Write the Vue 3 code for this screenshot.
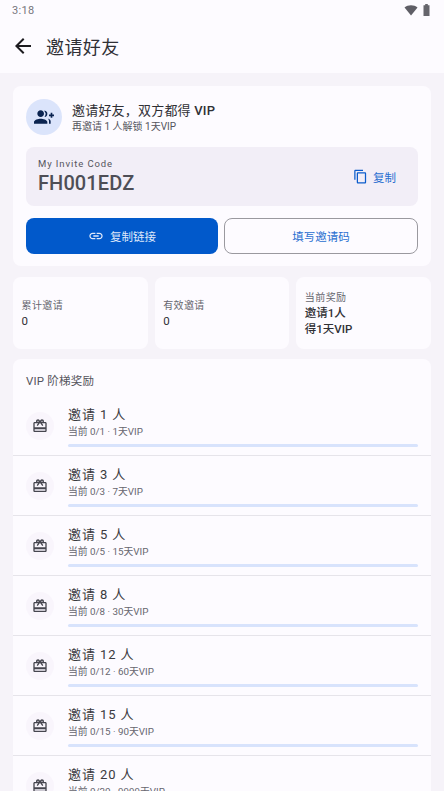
<script setup>
const rows = [
  { n: 1, d: 1 },
  { n: 3, d: 7 },
  { n: 5, d: 15 },
  { n: 8, d: 30 },
  { n: 12, d: 60 },
  { n: 15, d: 90 },
  { n: 20, d: 9999 }
]
</script>

<template>
  <div class="page">
    <div class="status">
      <span class="time">3:18</span>
      <span class="status-icons">
        <svg width="14" height="11" viewBox="0 0 14 11"><path d="M0.5 2.600C2.300 1 4.500 0.300 7 0.300s4.700 0.700 6.500 2.300L7 10.400z" fill="#5f5e66"/></svg>
        <svg width="7" height="12" viewBox="0 0 7 12"><path d="M2.200 0h2.600v1.200H6.500V12H.5V1.200h1.700z" fill="#66656c"/></svg>
      </span>
    </div>
    <header class="bar">
      <svg class="back" width="24" height="24" viewBox="0 0 24 24"><path d="M20 11H7.830l5.590-5.590L12 4l-8 8 8 8 1.410-1.410L7.830 13H20z" fill="#1c1b1f"/></svg>
      <h1>邀请好友</h1>
    </header>

    <main class="content">
      <section class="card invite">
        <div class="invite-head">
          <div class="avatar">
            <svg width="20" height="20" viewBox="0 0 24 24"><path d="M22 9V7h-2v2h-2v2h2v2h2v-2h2V9zM8 12c2.210 0 4-1.790 4-4s-1.790-4-4-4-4 1.790-4 4 1.790 4 4 4zm0 2c-2.670 0-8 1.340-8 4v2h16v-2c0-2.660-5.330-4-8-4zm4.510-8.950C13.430 6.090 14 7.470 14 8s-.57 2.910-1.490 3.950C14.950 11.570 16 10.020 16 8s-1.050-3.570-3.490-3.950zM16.530 13.830C17.420 14.660 18 15.700 18 17v3h2v-3c0-1.450-1.590-2.510-3.470-3.170z" fill="#0a2350"/></svg>
          </div>
          <div>
            <div class="invite-title">邀请好友，双方都得 <b>VIP</b></div>
            <div class="invite-sub">再邀请 1 人解锁 1天VIP</div>
          </div>
        </div>

        <div class="code-box">
          <div>
            <div class="code-label">My Invite Code</div>
            <div class="code">FH001EDZ</div>
          </div>
          <div class="copy">
            <svg width="15" height="15" viewBox="0 0 24 24"><path d="M16 1H4c-1.100 0-2 .9-2 2v14h2V3h12V1zm3 4H8c-1.100 0-2 .9-2 2v14c0 1.100.9 2 2 2h11c1.100 0 2-.9 2-2V7c0-1.100-.9-2-2-2zm0 16H8V7h11v14z" fill="#0b5ccc"/></svg>
            <span>复制</span>
          </div>
        </div>

        <div class="actions">
          <button class="btn primary">
            <svg width="16" height="16" viewBox="0 0 24 24"><path d="M3.900 12c0-1.710 1.390-3.100 3.100-3.100h4V7H7c-2.760 0-5 2.240-5 5s2.240 5 5 5h4v-1.900H7c-1.710 0-3.100-1.390-3.100-3.100zM8 13h8v-2H8v2zm9-6h-4v1.900h4c1.710 0 3.100 1.390 3.100 3.100s-1.390 3.100-3.100 3.100h-4V17h4c2.760 0 5-2.240 5-5s-2.240-5-5-5z" fill="#dfe8fa"/></svg>
            <span>复制链接</span>
          </button>
          <button class="btn outline">填写邀请码</button>
        </div>
      </section>

      <section class="stats">
        <div class="card stat">
          <div class="stat-label">累计邀请</div>
          <div class="stat-value">0</div>
        </div>
        <div class="card stat">
          <div class="stat-label">有效邀请</div>
          <div class="stat-value">0</div>
        </div>
        <div class="card stat">
          <div class="stat-label">当前奖励</div>
          <div class="stat-value strong">邀请1人<br />得1天VIP</div>
        </div>
      </section>

      <section class="card tiers">
        <div class="tiers-title">VIP 阶梯奖励</div>
        <div v-for="r in rows" :key="r.n" class="row">
          <div class="gift">
            <svg width="16" height="16" viewBox="0 0 24 24"><path d="M20 6h-2.180c.11-.31.18-.65.18-1 0-1.660-1.340-3-3-3-1.050 0-1.960.54-2.500 1.350l-.5.670-.5-.680C10.960 2.540 10.050 2 9 2 7.340 2 6 3.340 6 5c0 .35.07.69.18 1H4c-1.110 0-1.990.89-1.990 2L2 19c0 1.110.89 2 2 2h16c1.110 0 2-.89 2-2V8c0-1.110-.89-2-2-2zm-5-2c.55 0 1 .45 1 1s-.45 1-1 1-1-.45-1-1 .45-1 1-1zM9 4c.55 0 1 .45 1 1s-.45 1-1 1-1-.45-1-1 .45-1 1-1zm11 15H4v-2h16v2zm0-5H4V8h5.080L7 10.830 8.620 12 11 8.760l1-1.360 1 1.360L15.380 12 17 10.830 14.920 8H20v6z" fill="#46464f"/></svg>
          </div>
          <div class="row-body">
            <div class="row-title">邀请 {{ r.n }} 人</div>
            <div class="row-sub">当前 0/{{ r.n }} · {{ r.d }}天VIP</div>
            <div class="track"></div>
          </div>
        </div>
      </section>
    </main>
  </div>
</template>

<style>
html, body { margin: 0; height: 100%; overflow: hidden; }
</style>

<style scoped>
.page {
  width: 444px;
  height: 791px;
  overflow: hidden;
  background: #f6f3f9;
  font-family: Roboto, "Noto Sans CJK SC", sans-serif;
  color: #1c1b1f;
}
.status {
  height: 24px;
  background: #fdfbff;
  display: flex;
  align-items: center;
  justify-content: space-between;
  padding: 0 14px 4px 12px;
  box-sizing: border-box;
}
.time { font-size: 11px; letter-spacing: 0.3px; color: #77767c; }
.status-icons { display: flex; align-items: center; gap: 5px; }
.bar {
  height: 49px;
  background: #fdfbff;
  display: flex;
  align-items: center;
  padding: 0 0 5px 11px;
  box-sizing: border-box;
}
.back { flex: none; }
h1 {
  margin: 0 0 0 11px;
  font-size: 18px;
  font-weight: 400;
  letter-spacing: 0.4px;
  color: #303035;
}
.content {
  padding: 13px 13px 0;
  display: flex;
  flex-direction: column;
  gap: 10px;
}
.card { background: #fdfbff; border-radius: 8px; }
.invite { padding: 13px 13px 12px; height: 180px; box-sizing: border-box; }
.invite-head { display: flex; align-items: center; gap: 10px; height: 36px; }
.avatar {
  width: 36px;
  height: 36px;
  border-radius: 50%;
  background: #dbe4fb;
  display: flex;
  align-items: center;
  justify-content: center;
}
.invite-title { font-size: 13px; line-height: 17px; color: #303035; letter-spacing: 0.2px; }
.invite-title b { font-weight: 500; }
.invite-sub { font-size: 10px; line-height: 13px; color: #55555d; margin-top: 1px; }
.code-box {
  margin-top: 12px;
  height: 59px;
  padding: 0 12px;
  border-radius: 8px;
  background: #f2eef7;
  display: flex;
  align-items: center;
  justify-content: space-between;
  box-sizing: border-box;
}
.code-label { font-size: 9.500px; line-height: 12px; letter-spacing: 0.9px; color: #55555d; }
.code { font-size: 20px; line-height: 26px; font-weight: 500; letter-spacing: 0.1px; color: #4e4e56; }
.copy {
  display: flex;
  align-items: center;
  gap: 5px;
  margin-right: 10px;
  font-size: 11.500px;
  color: #2a6fd0;
}
.actions { display: flex; gap: 6px; margin-top: 11.500px; }
.btn {
  flex: 1 1 0;
  min-width: 0;
  height: 36.500px;
  border-radius: 8px;
  font-family: inherit;
  font-size: 11.500px;
  display: flex;
  align-items: center;
  justify-content: center;
  gap: 6px;
  padding: 0;
  box-sizing: border-box;
}
.primary { background: #0159cb; border: 0; color: #dfe8fa; }
.outline { background: #fdfbff; border: 1px solid #9a999f; color: #2a6fd0; }
.stats { display: grid; grid-template-columns: repeat(3, 1fr); gap: 7px; margin-top: 1px; }
.stat {
  height: 72px;
  padding: 0 8.500px;
  display: flex;
  flex-direction: column;
  justify-content: center;
  box-sizing: border-box;
}
.stat-label { font-size: 10px; line-height: 16px; letter-spacing: 0.4px; color: #66666e; position: relative; top: 1px; }
.stat-value { font-size: 11.500px; line-height: 16px; color: #303035; }
.strong { font-weight: 500; }
.tiers { padding-top: 14px; }
.tiers-title { font-size: 11.500px; line-height: 16px; color: #55555d; padding-left: 13px; margin-bottom: 7px; letter-spacing: 0.2px; }
.row {
  height: 60px;
  display: flex;
  align-items: center;
  gap: 14px;
  padding: 0 13px;
  border-bottom: 1px solid #e6e4ea;
  box-sizing: border-box;
}
.gift {
  flex: none;
  width: 28px;
  height: 28px;
  border-radius: 50%;
  background: #f9f5fc;
  display: flex;
  align-items: center;
  justify-content: center;
}
.row-body { flex: 1; min-width: 0; padding-top: 2px; }
.row-title { font-size: 13px; line-height: 17px; letter-spacing: 0.9px; color: #3a3a40; }
.row-sub { font-size: 9.800px; line-height: 13px; margin-top: 2px; color: #66666e; }
.track { height: 3px; margin-top: 6px; border-radius: 2px; background: #d8e3fc; }
</style>
